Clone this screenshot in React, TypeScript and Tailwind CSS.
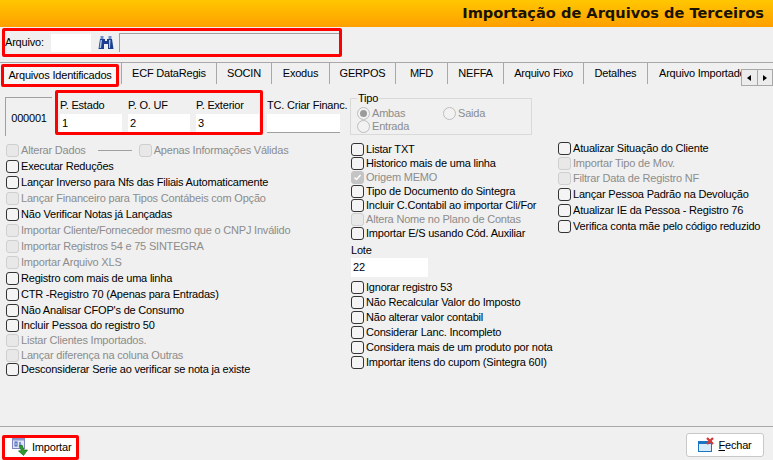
type Item = { label: string; h: number; off?: boolean; checked?: boolean }

const leftItems: Item[] = [
  { label: 'Executar Reduções', h: 16 },
  { label: 'Lançar Inverso para Nfs das Filiais Automaticamente', h: 16 },
  { label: 'Lançar Financeiro para Tipos Contábeis com Opção', h: 16, off: true },
  { label: 'Não Verificar Notas já Lançadas', h: 16 },
  { label: 'Importar Cliente/Fornecedor mesmo que o CNPJ Inválido', h: 16, off: true },
  { label: 'Importar Registros 54 e 75 SINTEGRA', h: 16, off: true },
  { label: 'Importar Arquivo XLS', h: 16, off: true },
  { label: 'Registro com mais de uma linha', h: 16 },
  { label: 'CTR -Registro 70 (Apenas para Entradas)', h: 16 },
  { label: "Não Analisar CFOP's de Consumo", h: 16 },
  { label: 'Incluir Pessoa do registro 50', h: 15 },
  { label: 'Listar Clientes Importados.', h: 15, off: true },
  { label: 'Lançar diferença na coluna Outras', h: 14, off: true },
  { label: 'Desconsiderar Serie ao verificar se nota ja existe', h: 15 },
]

const midTop: Item[] = [
  { label: 'Listar TXT', h: 14 },
  { label: 'Historico mais de uma linha', h: 14 },
  { label: 'Origem MEMO', h: 14, off: true, checked: true },
  { label: 'Tipo de Documento do Sintegra', h: 14 },
  { label: 'Incluir C.Contabil ao importar Cli/For', h: 14 },
  { label: 'Altera Nome no Plano de Contas', h: 14, off: true },
  { label: 'Importar E/S usando Cód. Auxiliar', h: 14 },
]

const midBottom: Item[] = [
  { label: 'Ignorar registro 53', h: 15 },
  { label: 'Não Recalcular Valor do Imposto', h: 15 },
  { label: 'Não alterar valor contabil', h: 15 },
  { label: 'Considerar Lanc. Incompleto', h: 15 },
  { label: 'Considera mais de um produto por nota', h: 15 },
  { label: 'Importar itens do cupom (Sintegra 60I)', h: 15 },
]

const rightItems: Item[] = [
  { label: 'Atualizar Situação do Cliente', h: 15 },
  { label: 'Importar Tipo de Mov.', h: 15, off: true },
  { label: 'Filtrar Data de Registro NF', h: 15, off: true },
  { label: 'Lançar Pessoa Padrão na Devolução', h: 16 },
  { label: 'Atualizar IE da Pessoa - Registro 76', h: 16 },
  { label: 'Verifica conta mãe pelo código reduzido', h: 16 },
]

const tabs = [
  { label: 'ECF DataRegis', w: 'w-[95px]' },
  { label: 'SOCIN', w: 'w-[55px]' },
  { label: 'Exodus', w: 'w-[58px]' },
  { label: 'GERPOS', w: 'w-[66px]' },
  { label: 'MFD', w: 'w-[52px]' },
  { label: 'NEFFA', w: 'w-[56px]' },
  { label: 'Arquivo Fixo', w: 'w-[80px]' },
  { label: 'Detalhes', w: 'w-[64px]' },
]

function Check({ label, h, off, checked }: Item) {
  return (
    <div style={{ height: h }} className="flex items-center gap-[2px] whitespace-nowrap">
      <span
        className={`flex h-[13px] w-[13px] shrink-0 items-center justify-center rounded-[3px] border ${
          checked ? 'border-[#c4c4c4] bg-[#c4c4c4]' : off ? 'border-[#cfcfcf] bg-[#e8e8e8]' : 'border-[#333333] bg-[#f4f4f4]'
        }`}
      >
        {checked && (
          <svg width="9" height="9" viewBox="0 0 9 9">
            <path d="M1.5 4.5 L3.5 6.5 L7.5 2" fill="none" stroke="#fff" strokeWidth="1.4" />
          </svg>
        )}
      </span>
      <span className={off ? 'text-[#8c8c8c]' : 'text-black'}>{label}</span>
    </div>
  )
}

function Radio({ label, selected }: { label: string; selected?: boolean }) {
  return (
    <div className="flex h-[13px] items-center gap-[2px] text-[#8c8c8c]">
      <span className="flex h-[13px] w-[13px] shrink-0 items-center justify-center rounded-full border border-[#bdbdbd] bg-[#f2f2f2]">
        {selected && <span className="h-[7px] w-[7px] rounded-full bg-[#9a9a9a]" />}
      </span>
      {label}
    </div>
  )
}

function Field({ label, value, w }: { label: string; value: string; w: string }) {
  return (
    <div className={`flex flex-col ${w}`}>
      <span className="h-[18px] leading-[18px]">{label}</span>
      <div className="h-[18px] bg-white pl-[2px] leading-[18px]">{value}</div>
    </div>
  )
}

function Binoculars() {
  return (
    <svg width="16" height="15" viewBox="0 0 16 15">
      <rect x="2.5" y="1" width="3" height="3" fill="#6f8fc8" />
      <rect x="10.5" y="1" width="3" height="3" fill="#6f8fc8" />
      <path d="M2 4h5v2h2V4h5l1.5 10h-5.5V9H6v5H.5z" fill="#1d3f8f" />
      <path d="M2.5 5h1.5L3 13H1.5zM11 5h1.5L12 13h-1z" fill="#a9c3ea" />
    </svg>
  )
}

function ImportIcon() {
  return (
    <svg width="17" height="19" viewBox="0 0 17 19" className="shrink-0">
      <rect x="0.5" y="0.5" width="12" height="10" fill="#dfe6f5" stroke="#7d86c2" />
      <rect x="0.5" y="0.5" width="12" height="2" fill="#8f9ad0" />
      <rect x="3" y="4" width="2" height="4" fill="none" stroke="#1f3fa8" strokeWidth="0.8" />
      <path d="M8 4v4" stroke="#1f3fa8" strokeWidth="1" />
      <path d="M7 8 L10 7 L12 12 L15.5 12 L11.5 17.5 L6.5 13 L9.5 12.5 Z" fill="#2f9a2f" stroke="#1b6b1b" strokeWidth="0.7" />
    </svg>
  )
}

function CloseIcon() {
  return (
    <svg width="17" height="16" viewBox="0 0 17 16" className="shrink-0">
      <rect x="0.5" y="4.5" width="13" height="10" fill="#d9ecfb" stroke="#1c74c4" />
      <rect x="0.5" y="4.5" width="13" height="2.5" fill="#1c74c4" />
      <path d="M9 1 L15 7 M15 1 L9 7" stroke="#d33a3a" strokeWidth="2.4" />
    </svg>
  )
}

export default function App() {
  return (
    <div className="flex h-[460px] w-[773px] flex-col overflow-hidden bg-[#f0f0f0] font-['Liberation_Sans',sans-serif] text-[11px] leading-none tracking-[-0.2px] text-black">
      {/* title */}
      <div className="flex h-[27px] shrink-0 items-center justify-end bg-gradient-to-b from-[#ffc700] to-[#ff9f00] pr-[9px] font-['DejaVu_Sans',sans-serif] text-[14.6px] font-bold tracking-normal text-[#1a1200]">
        Importação de Arquivos de Terceiros
      </div>

      {/* arquivo */}
      <div className="ml-[2px] mt-px flex h-[29px] w-[340px] shrink-0 items-center rounded-[2px] border-[3px] border-[#ff0000]">
        <span className="w-[46px]">Arquivo:</span>
        <div className="h-[18px] w-[40px] bg-white" />
        <div className="ml-[7px] mr-[5px]">
          <Binoculars />
        </div>
        <div className="h-[19px] w-[220px] border-l border-t border-[#a0a0a0] border-r-white border-b-white" />
      </div>

      {/* tabs */}
      <div className="relative mt-[5px] flex h-[25px] shrink-0 whitespace-nowrap border-t border-[#a8a8a8]">
        <div className="z-10 ml-px mt-px flex h-[23px] w-[118px] shrink-0 items-center justify-center rounded-[2px] border-[3px] border-[#ff0000] bg-[#f7f7f7]">
          Arquivos Identificados
        </div>
        <div className="h-[21px] w-[3px] shrink-0 border-r border-[#a8a8a8]" />
        {tabs.map((t) => (
          <div key={t.label} className={`flex h-[21px] shrink-0 items-center justify-center border-r border-[#a8a8a8] ${t.w}`}>
            {t.label}
          </div>
        ))}
        <div className="flex h-[21px] w-[93px] shrink-0 items-center overflow-hidden pl-[11px]">
          Arquivo Importado
        </div>
        <div className="absolute right-0 top-[6px] flex h-[17px] w-[32px] border border-[#a8a8a8] bg-[#ececec]">
          <span className="flex flex-1 items-center justify-center border-r border-[#a8a8a8]">
            <svg width="4" height="6" viewBox="0 0 4 6"><path d="M4 0v6L0 3z" fill="#000" /></svg>
          </span>
          <span className="flex flex-1 items-center justify-center">
            <svg width="4" height="6" viewBox="0 0 4 6"><path d="M0 0v6l4-3z" fill="#000" /></svg>
          </span>
        </div>
      </div>

      {/* header fields */}
      <div className="mt-[3px] flex h-[46px] shrink-0 items-start whitespace-nowrap pl-[5px]">
        <div className="mt-[7px] flex h-[39px] w-[47px] shrink-0 items-center justify-center border-l border-t border-[#a0a0a0] border-r-white border-b-white pt-[2px]">
          000001
        </div>
        <div className="ml-[3px] flex h-[45px] w-[208px] shrink-0 gap-[6px] rounded-[2px] border-[3px] border-[#ff0000] pl-[2px] pt-[3px]">
          <Field label="P. Estado" value="1" w="w-[62px]" />
          <Field label="P. O. UF" value="2" w="w-[62px]" />
          <Field label="P. Exterior" value="3" w="w-[63px]" />
        </div>
        <div className="ml-[4px] mt-[6px] flex w-[76px] shrink-0 flex-col">
          <span className="h-[18px] leading-[18px]">TC. Criar Financ.</span>
          <div className="h-[19px] w-[73px] border-b border-[#a0a0a0] bg-white" />
        </div>
        <div className="relative ml-[7px] mt-[8px] h-[37px] w-[182px] shrink-0 border border-[#d9d9d9] pl-[6px] pt-[8px]">
          <span className="absolute left-[6px] top-[-6px] bg-[#f0f0f0] px-px">Tipo</span>
          <div className="grid grid-cols-[86px_1fr]">
            <Radio label="Ambas" selected />
            <Radio label="Saida" />
            <Radio label="Entrada" />
          </div>
        </div>
      </div>

      {/* options */}
      <div className="mt-[6px] flex min-h-0 flex-1 pl-[6px]">
        <div className="w-[345px] shrink-0">
          <div className="flex h-[16px] items-center">
            <Check label="Alterar Dados" h={16} off />
            <div className="ml-[12px] mr-[7px] h-px w-[34px] bg-[#a0a0a0]" />
            <Check label="Apenas Informações Válidas" h={16} off />
          </div>
          {leftItems.map((i) => (
            <Check key={i.label} {...i} />
          ))}
        </div>
        <div className="w-[207px] shrink-0">
          {midTop.map((i) => (
            <Check key={i.label} {...i} />
          ))}
          <div className="mt-[5px] h-[13px]">Lote</div>
          <div className="mb-[3px] flex h-[19px] w-[77px] items-center bg-white pl-[2px]">22</div>
          {midBottom.map((i) => (
            <Check key={i.label} {...i} />
          ))}
        </div>
        <div className="-mt-px flex-1">
          {rightItems.map((i) => (
            <Check key={i.label} {...i} />
          ))}
        </div>
      </div>

      {/* footer */}
      <div className="flex h-[34px] shrink-0 items-start justify-between border-t border-[#a8a8a8] pl-[2px] pr-[9px] pt-[6px]">
        <div className="mt-[2px] flex h-[25px] w-[77px] shrink-0 items-center gap-[3px] rounded-[2px] border-[3px] border-[#ff0000] bg-white pl-[7px]">
          <ImportIcon />
          Importar
        </div>
        <div className="flex h-[24px] w-[78px] shrink-0 items-center justify-center gap-[3px] rounded-[3px] border border-[#c8c8c8] bg-white">
          <CloseIcon />
          <span><span className="underline">F</span>echar</span>
        </div>
      </div>
    </div>
  )
}
